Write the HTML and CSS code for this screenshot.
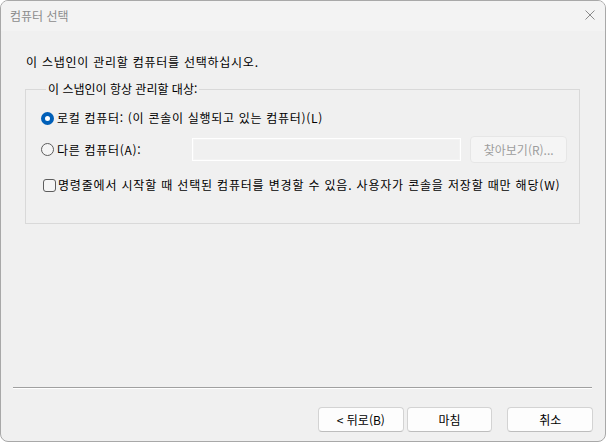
FILE: index.html
```html
<!DOCTYPE html>
<html lang="ko">
<head>
<meta charset="utf-8">
<title>컴퓨터 선택</title>
<link rel="stylesheet" href="styles.css">
</head>
<body>
<div class="window">
  <div class="titlebar">
    <span class="title">컴퓨터 선택</span>
    <svg class="close" width="10" height="10" viewBox="0 0 10 10"><path d="M0.5 0.5 L9.5 9.5 M9.5 0.5 L0.5 9.5" stroke="#8a8a8a" stroke-width="1" fill="none"/></svg>
  </div>
  <div class="content">
    <p class="intro">이 스냅인이 관리할 컴퓨터를 선택하십시오.</p>
    <fieldset class="group">
      <legend>이 스냅인이 항상 관리할 대상:</legend>
      <div class="row row-local">
        <span class="radio checked"></span>
        <span class="label">로컬 컴퓨터: (이 콘솔이 실행되고 있는 컴퓨터)(L)</span>
      </div>
      <div class="row row-other">
        <div class="other-choice">
          <span class="radio"></span>
          <span class="label">다른 컴퓨터(A):</span>
        </div>
        <div class="textbox"></div>
        <button class="btn disabled">찾아보기(R)...</button>
      </div>
      <div class="row row-check">
        <span class="checkbox"></span>
        <span class="label">명령줄에서 시작할 때 선택된 컴퓨터를 변경할 수 있음. 사용자가 콘솔을 저장할 때만 해당(W)</span>
      </div>
    </fieldset>
  </div>
  <div class="separator"></div>
  <div class="footer">
    <button class="btn">&lt; 뒤로(B)</button>
    <button class="btn">마침</button>
    <button class="btn cancel">취소</button>
  </div>
</div>
</body>
</html>
```

FILE: styles.css
```css
* { box-sizing: border-box; }
html, body {
  margin: 0;
  padding: 0;
  background: #ffffff;
}
body {
  font-family: "Noto Sans CJK KR", "Noto Sans", sans-serif;
  font-size: 12px;
  color: #000;
}
.window {
  width: 606px;
  height: 442px;
  border: 1px solid #a8a8a8;
  border-radius: 8px;
  overflow: hidden;
  background: #f0f0f0;
  display: flex;
  flex-direction: column;
}
.titlebar {
  height: 30px;
  background: #f3f3f3;
  display: flex;
  align-items: center;
  justify-content: space-between;
  padding: 0 10px 0 9px;
  flex: none;
}
.title {
  color: #8c8c8c;
  font-size: 12px;
  line-height: 16px;
}
.close { display: block; margin-top: -2px; }
.content {
  padding: 0 0 0 24px;
}
.intro {
  margin: 23px 0 0 1px;
  line-height: 16px;
  letter-spacing: 0.75px;
}
.group {
  margin: 11px 0 0 0;
  width: 555px;
  border: 1px solid #d9d9d9;
  padding: 0 12px 30px 15px;
  min-width: 0;
}
.group legend {
  margin-left: 5px;
  padding: 0 2px;
  line-height: 16px;
}
.row {
  display: flex;
  align-items: center;
  line-height: 16px;
}
.label { letter-spacing: 0.7px; white-space: nowrap; }
.row-local { margin-top: 10px; height: 22px; gap: 3px; }
.row-other { margin-top: 7px; height: 27px; }
.row-check { margin-top: 14px; height: 16px; gap: 2px; padding-left: 2px; }
.row-check .label { letter-spacing: 0.82px; }
.other-choice {
  width: 152px;
  display: flex;
  align-items: center;
  gap: 3px;
}
.radio {
  width: 13px;
  height: 13px;
  border-radius: 50%;
  border: 1px solid #5d5d5d;
  background: #f5f5f5;
  flex: none;
}
.radio.checked {
  border: 4px solid #005fb8;
  background: #ffffff;
}
.checkbox {
  width: 13px;
  height: 13px;
  border-radius: 3px;
  border: 1px solid #5d5d5d;
  background: #f5f5f5;
  flex: none;
}
.textbox {
  width: 269px;
  height: 23px;
  border: 1px solid #ffffff;
  box-shadow: inset 0 0 0 1px #f3f3f3;
  background: #f0f0f0;
  flex: none;
}
.btn {
  font-family: "Noto Sans CJK KR", "Noto Sans", sans-serif;
  font-size: 12px;
  color: #000;
  background: #fdfdfd;
  border: 1px solid #d3d3d3;
  border-bottom-color: #bdbdbd;
  border-radius: 4px;
  height: 25px;
  width: 86px;
  padding: 0;
  line-height: 16px;
}
.row-other .btn {
  margin-left: 9px;
  width: 97px;
  height: 27px;
}
.btn.disabled {
  background: #f5f5f5;
  border-color: #e6e6e6;
  color: #9d9d9d;
}
.separator {
  margin: auto 13px 0 12px;
  height: 2px;
  border-top: 1px solid #a0a0a0;
  border-bottom: 1px solid #ffffff;
  flex: none;
}
.footer {
  height: 52px;
  display: flex;
  align-items: flex-start;
  padding: 18px 12px 0 317px;
  flex: none;
}
.footer .btn + .btn { margin-left: 3px; }
.footer .btn.cancel { margin-left: 15px; }
```
